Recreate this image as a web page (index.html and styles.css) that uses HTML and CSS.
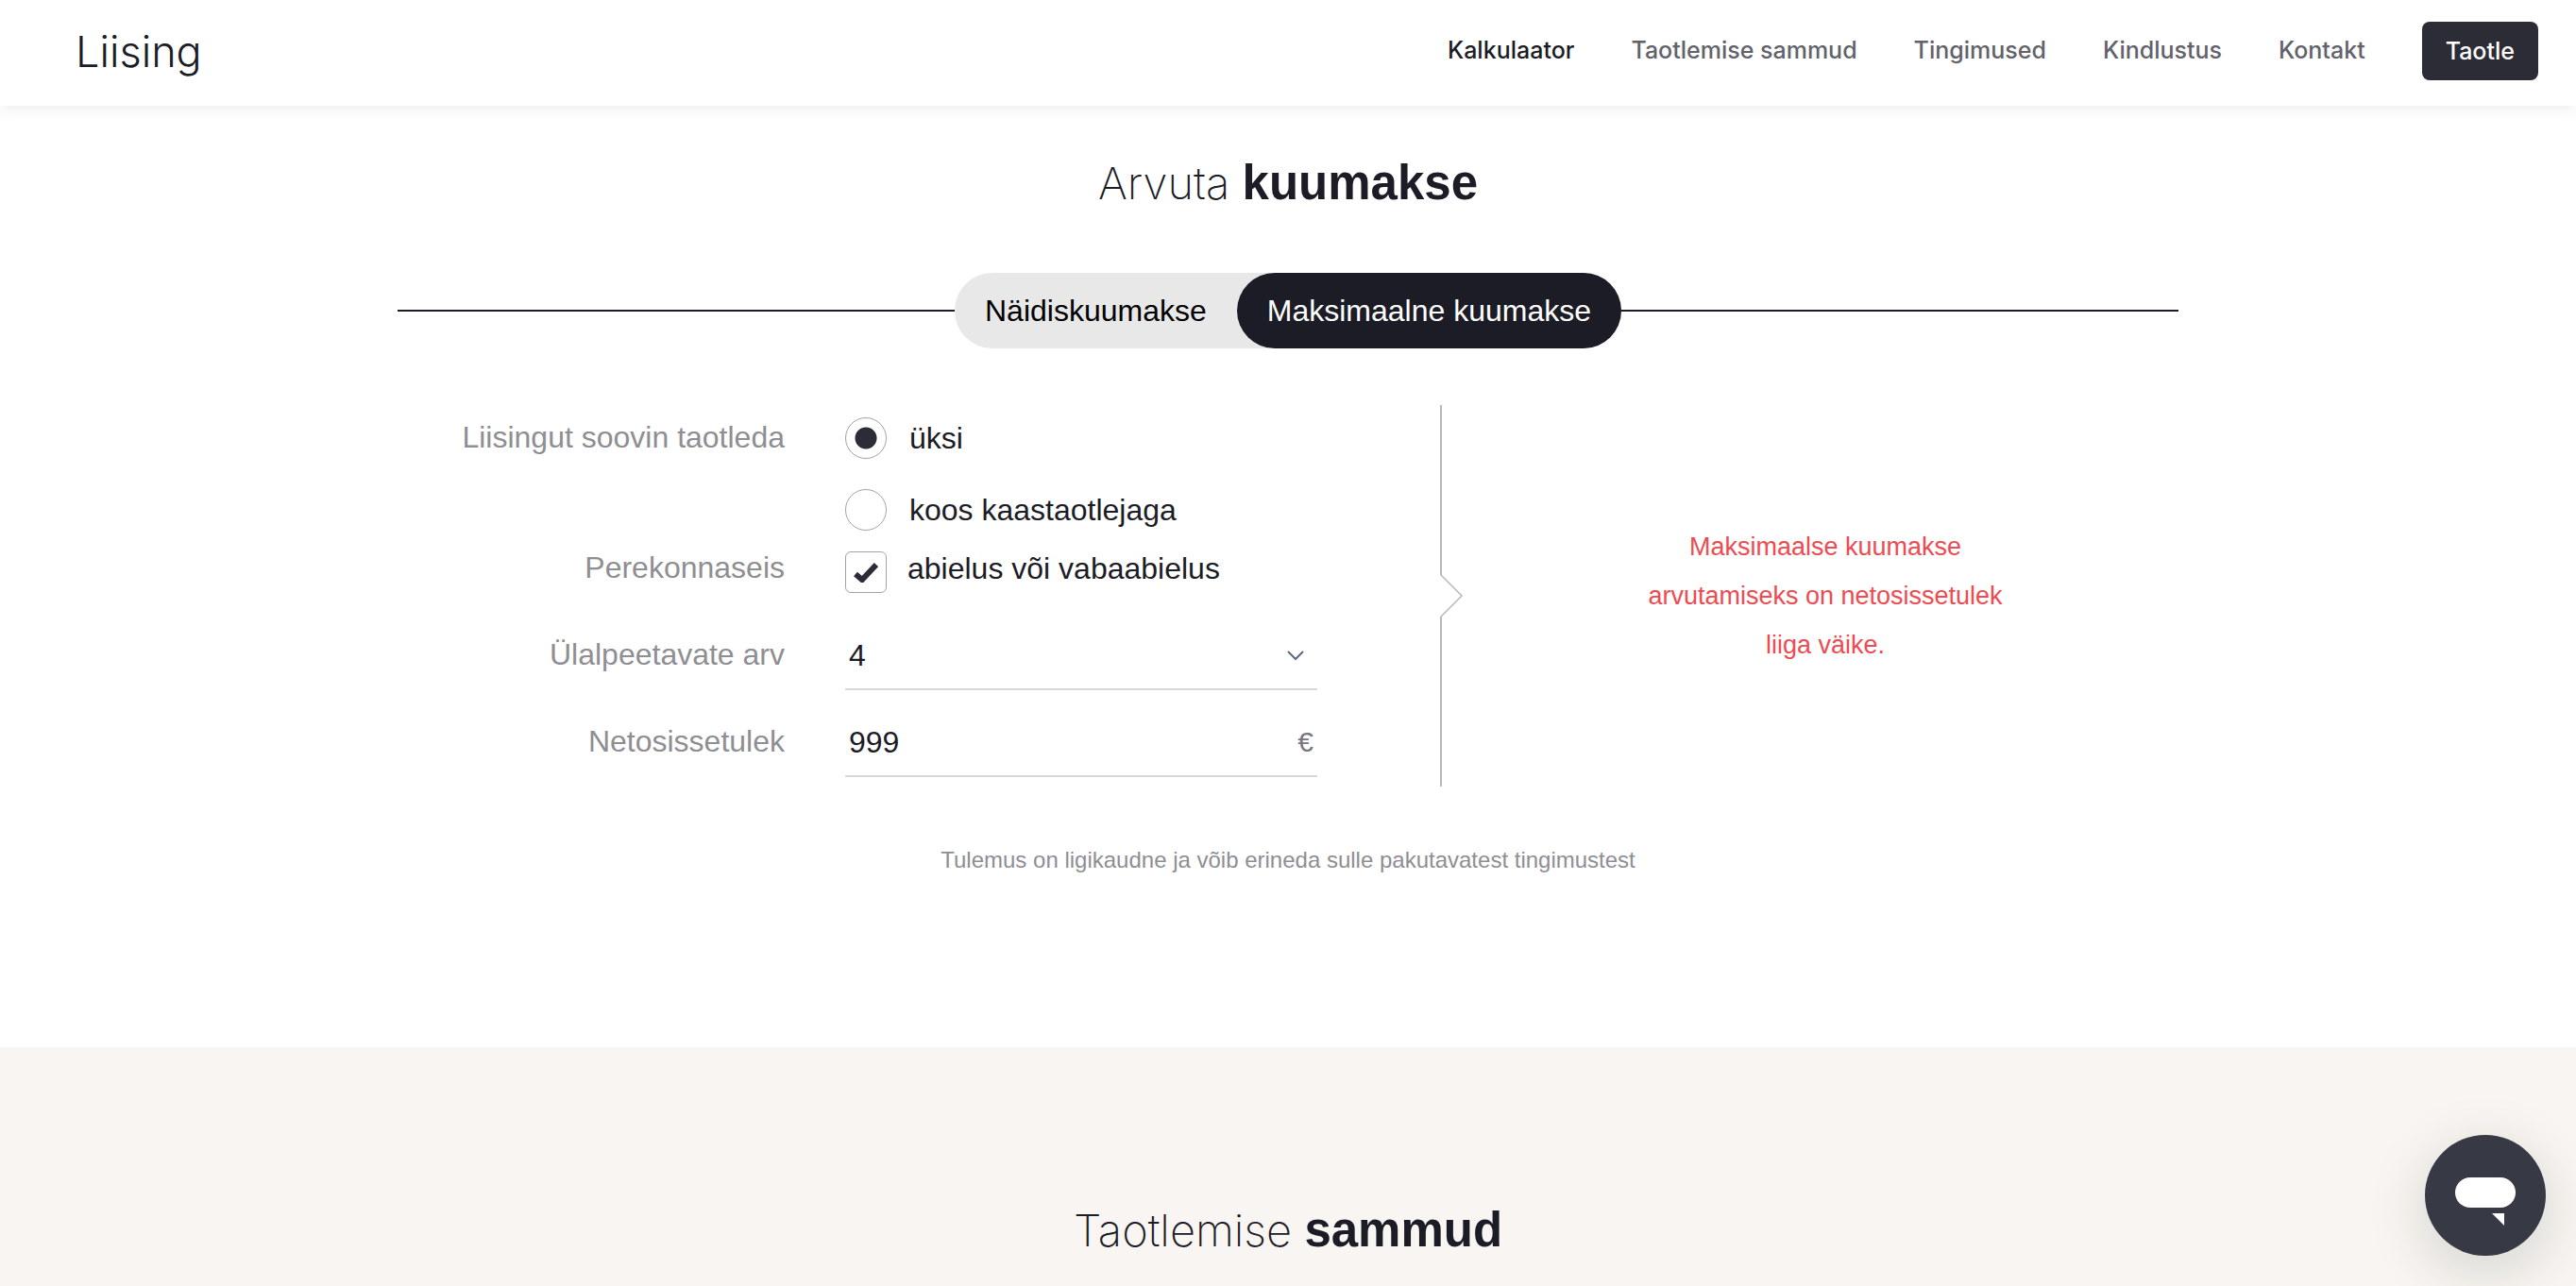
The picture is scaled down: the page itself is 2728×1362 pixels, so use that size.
FILE: index.html
```html
<!DOCTYPE html>
<html lang="et">
<head>
<meta charset="utf-8">
<meta name="viewport" content="width=device-width, initial-scale=1">
<title>Liising</title>
<link rel="stylesheet" href="styles.css">
</head>
<body>
<header class="header">
  <a class="logo" href="#">Liising</a>
  <nav class="nav">
    <a class="nav-link is-active" href="#kalkulaator">Kalkulaator</a>
    <a class="nav-link" href="#sammud">Taotlemise sammud</a>
    <a class="nav-link" href="#tingimused">Tingimused</a>
    <a class="nav-link" href="#kindlustus">Kindlustus</a>
    <a class="nav-link" href="#kontakt">Kontakt</a>
    <button class="apply" type="button">Taotle</button>
  </nav>
</header>
<main class="main">
  <section class="calculator" id="kalkulaator">
    <h2 class="title">Arvuta <strong>kuumakse</strong></h2>
    <div class="tabs-row">
      <div class="tabs">
        <button class="tab" type="button">Näidiskuumakse</button>
        <button class="tab is-selected" type="button">Maksimaalne kuumakse</button>
      </div>
    </div>
    <div class="panel">
      <form class="form">
        <span class="label label-radio" id="applicant">Liisingut soovin taotleda</span>
        <div class="radios" role="radiogroup" aria-labelledby="applicant">
          <label class="option"><input class="radio" type="radio" name="applicant" checked>üksi</label>
          <label class="option"><input class="radio" type="radio" name="applicant">koos kaastaotlejaga</label>
        </div>
        <span class="label label-check">Perekonnaseis</span>
        <label class="check">
          <span class="check-box">
            <input class="checkbox" type="checkbox" checked>
            <svg class="tick" viewBox="0 0 26 22" aria-hidden="true"><path d="M2 13l7 6L24 3" fill="none" stroke="#2c2c36" stroke-width="6"/></svg>
          </span>abielus või vabaabielus</label>
        <label class="label label-field" for="dependents">Ülalpeetavate arv</label>
        <div class="field">
          <select class="control" id="dependents"><option>0</option><option>1</option><option>2</option><option>3</option><option selected>4</option></select>
          <svg class="chevron" viewBox="0 0 18 12" aria-hidden="true"><path d="M1 2l8 8 8-8" fill="none" stroke="#5c6b7c" stroke-width="2"/></svg>
        </div>
        <label class="label label-field" for="income">Netosissetulek</label>
        <div class="field">
          <input class="control" id="income" type="text" inputmode="numeric" value="999">
          <span class="unit">€</span>
        </div>
      </form>
      <div class="divider" aria-hidden="true">
        <span class="divider-line"></span>
        <svg class="divider-arrow" viewBox="0 0 25 44"><path d="M1 0l22 22L1 44" fill="none" stroke="#b8b8bb" stroke-width="1.5"/></svg>
        <span class="divider-line"></span>
      </div>
      <p class="result">Maksimaalse kuumakse arvutamiseks on netosissetulek liiga väike.</p>
    </div>
    <p class="note">Tulemus on ligikaudne ja võib erineda sulle pakutavatest tingimustest</p>
  </section>
  <section class="steps" id="sammud">
    <h2 class="title">Taotlemise <strong>sammud</strong></h2>
  </section>
</main>
<button class="chat" type="button" aria-label="Vestlus">
  <svg class="chat-icon" viewBox="0 0 64 52" aria-hidden="true"><rect width="64" height="32" rx="16" fill="#fff"/><path d="M39 38h13v13z" fill="#fff"/></svg>
</button>
</body>
</html>
```
FILE: styles.css
```css
* { box-sizing: border-box; }

body {
  margin: 0;
  min-height: 100vh;
  display: flex;
  flex-direction: column;
  font-family: "Liberation Sans", Arial, sans-serif;
  font-size: 32px;
  color: #1c1c26;
  background: #fff;
}

button, input, select { font: inherit; color: inherit; }
button { border: 0; cursor: pointer; }

.header {
  position: relative;
  display: flex;
  align-items: center;
  justify-content: space-between;
  height: 112px;
  padding: 0 40px 4px 80px;
  background: #fff;
  box-shadow: 0 4px 16px rgba(0, 0, 0, 0.07);
}

.logo {
  font-family: Inter, sans-serif;
  font-size: 45px;
  font-weight: 300;
  color: inherit;
  text-decoration: none;
}

.nav {
  display: flex;
  align-items: center;
  gap: 60px;
  font-family: Inter, sans-serif;
  font-size: 25px;
  font-weight: 500;
}

.nav-link { padding-bottom: 2px; color: #62626b; text-decoration: none; }
.nav-link.is-active { color: #1c1c26; }

.apply {
  height: 62px;
  padding: 0 25px;
  border-radius: 8px;
  background: #2c2c36;
  color: #fff;
}

.main { flex: 1; display: flex; flex-direction: column; }

.calculator { padding: 52px 0 184px; }

.title {
  margin: 0;
  font-family: Inter, sans-serif;
  font-size: 47px;
  line-height: 60px;
  font-weight: 200;
  text-align: center;
}

.title strong {
  font-family: "Liberation Sans", Arial, sans-serif;
  font-size: 51px;
  font-weight: 700;
}

.tabs-row {
  display: flex;
  align-items: center;
  max-width: 1886px;
  margin: 65px auto 0;
}

.tabs-row::before,
.tabs-row::after {
  content: "";
  flex: 1;
  height: 2px;
  background: #1c1c26;
}

.tabs { display: flex; border-radius: 40px; background: #e8e8e8; }

.tab {
  height: 80px;
  padding: 0 32px;
  border-radius: 40px;
  background: transparent;
  color: #000;
}

.tab.is-selected { background: #1c1c26; color: #fff; }

.panel {
  display: grid;
  grid-template-columns: 974fr 164fr 748fr;
  max-width: 1886px;
  margin: 57px auto 0;
}

.form {
  display: grid;
  grid-template-columns: 410fr 500fr;
  grid-template-rows: 152px 61px 92px 92px;
  column-gap: 64px;
  padding-bottom: 13px;
}

.label { text-align: right; color: #8e8e93; line-height: 36px; }
.label-radio { padding-top: 19px; }
.label-check { padding-top: 5px; }
.label-field { padding-top: 36px; }

.option { display: flex; align-items: center; gap: 24px; height: 76px; }

.radio,
.checkbox {
  appearance: none;
  width: 44px;
  height: 44px;
  margin: 0;
  border: 1px solid #a4a4a8;
  background: #fff;
}

.radio { border-radius: 50%; }
.radio:checked { background: radial-gradient(circle, #2c2c36 11px, transparent 12px); }
.checkbox { display: block; border-radius: 6px; }

.check {
  display: flex;
  align-items: flex-start;
  gap: 22px;
  padding-top: 6px;
  line-height: 36px;
}

.check-box { display: grid; place-items: center; }
.check-box > * { grid-area: 1 / 1; }
.tick { width: 26px; height: 22px; pointer-events: none; }

.field {
  display: flex;
  align-items: center;
  padding: 20px 4px 0;
  border-bottom: 2px solid #d8d8d8;
}

.control {
  appearance: none;
  flex: 1;
  min-width: 0;
  padding: 0;
  border: 0;
  outline: 0;
  background: transparent;
}

.chevron { width: 18px; height: 12px; margin-right: 10px; }
.unit { font-size: 30px; color: #77777e; }

.divider {
  display: flex;
  flex-direction: column;
  margin: 3px 0 3px auto;
  width: 34px;
}

.divider-line { flex: 1; width: 2px; background: #b8b8bb; }
.divider-arrow { display: block; width: 25px; height: 44px; }

.result {
  align-self: center;
  justify-self: center;
  max-width: 400px;
  margin: 0;
  font-size: 27px;
  line-height: 52px;
  text-align: center;
  color: #ee4b52;
}

.note {
  margin: 61px 0 0;
  font-size: 24px;
  line-height: 28px;
  text-align: center;
  color: #8e8e93;
}

.steps {
  flex: 1;
  padding-top: 164px;
  background: #f9f5f2;
}

.chat {
  position: fixed;
  right: 32px;
  bottom: 32px;
  display: grid;
  place-items: center;
  width: 128px;
  height: 128px;
  padding: 14px 0 0;
  border-radius: 50%;
  background: #373a44;
  box-shadow: 0 16px 64px rgba(0, 40, 20, 0.16);
}

.chat-icon { width: 64px; height: 52px; }
```
